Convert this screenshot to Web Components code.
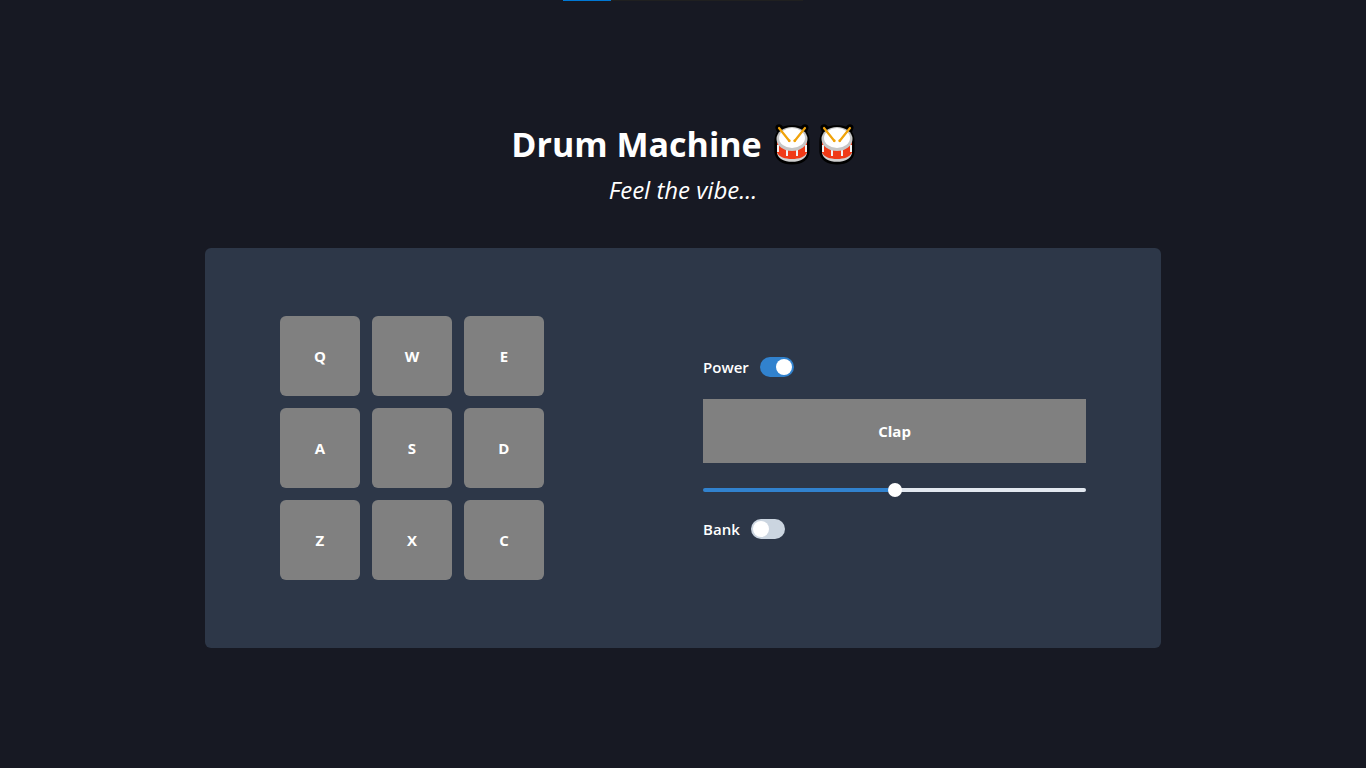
<!DOCTYPE html>
<html lang="en">
<head>
<meta charset="utf-8">
<meta name="viewport" content="width=device-width, initial-scale=1">
<title>Drum Machine</title>
<style>
  body { margin: 0; background: #171923; color: #fff; font: 16px/24px "Open Sans", "Noto Sans", sans-serif; }
</style>
</head>
<body>
<drum-app></drum-app>
<script>
class BaseElement extends HTMLElement {
  constructor() {
    super();
    this.attachShadow({ mode: "open" }).innerHTML =
      "<style>*{box-sizing:border-box}" + this.constructor.css + "</style>" + this.render();
  }
  render() { return ""; }
}

customElements.define("drum-icon", class extends BaseElement {
  static css = ":host{display:block;width:36px;height:42px} svg{display:block;width:100%;height:100%}";
  render() {
    return `<svg viewBox="0 0 36 42" role="img" aria-label="drum">
      <path fill="#000" d="M5 1.200C7 1.200 8 2.500 9 3.500C14 1.800 22 1.800 27 3.500C28 2.500 29 1.200 31 1.200C34 1.200 35.500 4 34 6.500L33 9C35 12 35.600 15 35.600 19V29C35 37 28 41.500 18 41.500S1 37 .4 29V19C.4 15 1 12 3 9L2 6.500C.5 4 2 1.200 5 1.200z"/>
      <path fill="#d0d0d0" d="M3 16v14c1 5.500 7 8.800 15 8.800s14-3.300 15-8.800V16z"/>
      <path fill="#f03a17" d="M3 19v10.500c2 4.500 8 6.500 15 6.500s13-2 15-6.500V19z"/>
      <path stroke="#f2f2f2" stroke-width="2" fill="none" d="M4 22v7M13 27v6M23 27v6M32 22v7"/>
      <ellipse cx="18" cy="16" rx="15.500" ry="12" fill="#c6c6c6"/>
      <ellipse cx="18" cy="15" rx="13" ry="10" fill="#fff"/>
      <path stroke="#f0a30a" stroke-width="2.200" stroke-linecap="round" fill="none" d="M5 5l10 12.500M31 5L21 17.500"/>
      <circle cx="15.300" cy="17.800" r="1.400" fill="#f0a30a"/><circle cx="20.700" cy="17.800" r="1.400" fill="#f0a30a"/>
    </svg>`;
  }
});

customElements.define("load-bar", class extends BaseElement {
  static css = `:host{display:block;position:absolute;top:0;left:50%;width:240px;height:1px;margin-left:-120px;background:#202020}
    div{width:20%;height:1px;background:#0078d4}`;
  render() { return "<div></div>"; }
});

customElements.define("drum-header", class extends BaseElement {
  static css = `:host{display:flex;flex-direction:column;align-items:center;gap:4px}
    h1{margin:0;display:flex;align-items:center;gap:12px;font-size:34px;line-height:48px;font-weight:700}
    .icons{display:flex;gap:9px}
    p{margin:0;font-size:24px;line-height:36px;font-style:italic}`;
  render() {
    return `<h1><span>Drum Machine</span><span class="icons"><drum-icon></drum-icon><drum-icon></drum-icon></span></h1>
      <p><slot></slot></p>`;
  }
});

customElements.define("drum-pad", class extends BaseElement {
  static css = `:host{display:block}
    button{display:block;width:80px;height:80px;padding:0;border:0;border-radius:6px;background:#808080;color:#fff;font:inherit;font-size:15px;font-weight:700;cursor:pointer}`;
  render() { return `<button type="button"><slot></slot></button>`; }
});

customElements.define("drum-switch", class extends BaseElement {
  static css = `:host{display:block}
    label{display:inline-flex;align-items:center;gap:11px;font-size:15px;line-height:24px;font-weight:600}
    input{appearance:none;display:flex;width:34px;height:20px;margin:0;padding:2px;border-radius:10px;background:#cbd5e0;cursor:pointer}
    input::before{content:"";width:16px;height:16px;border-radius:50%;background:#fff}
    input:checked{justify-content:flex-end;background:#3182ce}`;
  render() {
    const on = this.hasAttribute("on") ? " checked" : "";
    return `<label for="toggle"><slot></slot><input id="toggle" type="checkbox" role="switch"${on}></label>`;
  }
});

customElements.define("volume-slider", class extends BaseElement {
  static css = `:host{display:block;--level:50%}
    input{appearance:none;display:block;width:100%;height:14px;margin:0;background:none;cursor:pointer}
    input::-webkit-slider-runnable-track{height:4px;border-radius:2px;background:linear-gradient(to right,#3182ce var(--level),#e2e8f0 var(--level))}
    input::-webkit-slider-thumb{appearance:none;width:14px;height:14px;margin-top:-5px;border-radius:50%;background:#fff}`;
  render() { return `<input type="range" min="0" max="100" value="50" aria-label="Volume">`; }
  connectedCallback() {
    const input = this.shadowRoot.querySelector("input");
    input.addEventListener("input", () => this.style.setProperty("--level", input.value + "%"));
  }
});

customElements.define("drum-display", class extends BaseElement {
  static css = `:host{display:grid;place-items:center;height:64px;background:#808080;font-size:15px;font-weight:700}`;
  render() { return "<slot></slot>"; }
});

customElements.define("drum-app", class extends BaseElement {
  static css = `:host{display:flex;flex-direction:column;align-items:center;justify-content:center;gap:40px;min-height:100vh}
    main{display:flex;align-items:center;justify-content:space-between;width:70%;min-height:400px;padding:24px 75px;border-radius:6px;background:#2d3748}
    .pads{display:grid;grid-template-columns:repeat(3,auto);gap:12px}
    .controls{display:flex;flex-direction:column;gap:20px;flex:0 1 383px}`;
  render() {
    const pads = [..."QWEASDZXC"].map(k => `<drum-pad>${k}</drum-pad>`).join("");
    return `<load-bar></load-bar>
      <drum-header>Feel the vibe...</drum-header>
      <main>
        <div class="pads">${pads}</div>
        <div class="controls">
          <drum-switch on>Power</drum-switch>
          <drum-display>Clap</drum-display>
          <volume-slider></volume-slider>
          <drum-switch>Bank</drum-switch>
        </div>
      </main>`;
  }
});
</script>
</body>
</html>
